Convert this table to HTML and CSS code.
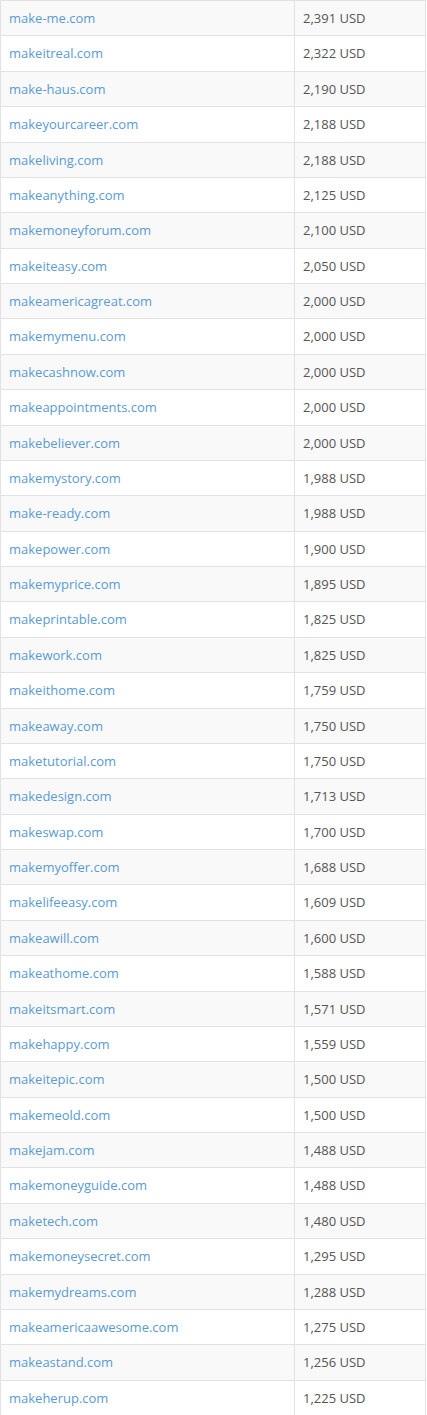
FILE: index.html
```html
<!DOCTYPE html>
<html lang="en">
<head>
    <meta charset="UTF-8">
    <meta name="viewport" content="width=device-width, initial-scale=1.0">
    <title>make domains</title>
    <link rel="stylesheet" href="styles.css">
</head>
<body>
    <table class="domain-table">
        <tbody>
            <tr><td><a href="#">make-me.com</a></td><td>2,391 USD</td></tr>
            <tr><td><a href="#">makeitreal.com</a></td><td>2,322 USD</td></tr>
            <tr><td><a href="#">make-haus.com</a></td><td>2,190 USD</td></tr>
            <tr><td><a href="#">makeyourcareer.com</a></td><td>2,188 USD</td></tr>
            <tr><td><a href="#">makeliving.com</a></td><td>2,188 USD</td></tr>
            <tr><td><a href="#">makeanything.com</a></td><td>2,125 USD</td></tr>
            <tr><td><a href="#">makemoneyforum.com</a></td><td>2,100 USD</td></tr>
            <tr><td><a href="#">makeiteasy.com</a></td><td>2,050 USD</td></tr>
            <tr><td><a href="#">makeamericagreat.com</a></td><td>2,000 USD</td></tr>
            <tr><td><a href="#">makemymenu.com</a></td><td>2,000 USD</td></tr>
            <tr><td><a href="#">makecashnow.com</a></td><td>2,000 USD</td></tr>
            <tr><td><a href="#">makeappointments.com</a></td><td>2,000 USD</td></tr>
            <tr><td><a href="#">makebeliever.com</a></td><td>2,000 USD</td></tr>
            <tr><td><a href="#">makemystory.com</a></td><td>1,988 USD</td></tr>
            <tr><td><a href="#">make-ready.com</a></td><td>1,988 USD</td></tr>
            <tr><td><a href="#">makepower.com</a></td><td>1,900 USD</td></tr>
            <tr><td><a href="#">makemyprice.com</a></td><td>1,895 USD</td></tr>
            <tr><td><a href="#">makeprintable.com</a></td><td>1,825 USD</td></tr>
            <tr><td><a href="#">makework.com</a></td><td>1,825 USD</td></tr>
            <tr><td><a href="#">makeithome.com</a></td><td>1,759 USD</td></tr>
            <tr><td><a href="#">makeaway.com</a></td><td>1,750 USD</td></tr>
            <tr><td><a href="#">maketutorial.com</a></td><td>1,750 USD</td></tr>
            <tr><td><a href="#">makedesign.com</a></td><td>1,713 USD</td></tr>
            <tr><td><a href="#">makeswap.com</a></td><td>1,700 USD</td></tr>
            <tr><td><a href="#">makemyoffer.com</a></td><td>1,688 USD</td></tr>
            <tr><td><a href="#">makelifeeasy.com</a></td><td>1,609 USD</td></tr>
            <tr><td><a href="#">makeawill.com</a></td><td>1,600 USD</td></tr>
            <tr><td><a href="#">makeathome.com</a></td><td>1,588 USD</td></tr>
            <tr><td><a href="#">makeitsmart.com</a></td><td>1,571 USD</td></tr>
            <tr><td><a href="#">makehappy.com</a></td><td>1,559 USD</td></tr>
            <tr><td><a href="#">makeitepic.com</a></td><td>1,500 USD</td></tr>
            <tr><td><a href="#">makemeold.com</a></td><td>1,500 USD</td></tr>
            <tr><td><a href="#">makejam.com</a></td><td>1,488 USD</td></tr>
            <tr><td><a href="#">makemoneyguide.com</a></td><td>1,488 USD</td></tr>
            <tr><td><a href="#">maketech.com</a></td><td>1,480 USD</td></tr>
            <tr><td><a href="#">makemoneysecret.com</a></td><td>1,295 USD</td></tr>
            <tr><td><a href="#">makemydreams.com</a></td><td>1,288 USD</td></tr>
            <tr><td><a href="#">makeamericaawesome.com</a></td><td>1,275 USD</td></tr>
            <tr><td><a href="#">makeastand.com</a></td><td>1,256 USD</td></tr>
            <tr><td><a href="#">makeherup.com</a></td><td>1,225 USD</td></tr>
        </tbody>
    </table>
</body>
</html>
```

FILE: styles.css
```css
body {
    margin: 0;
    font-family: "Open Sans", "Liberation Sans", Arial, sans-serif;
    font-size: 13px;
    color: #555;
    background: #fff;
}

.domain-table {
    width: 426px;
    border-collapse: collapse;
    border: 1px solid #e2e2e2;
}

.domain-table td {
    padding: 8px 8px;
    line-height: 18.375px;
    border: 1px solid #e2e2e2;
    vertical-align: top;
}

.domain-table td:first-child {
    width: 277px;
}

.domain-table tr:nth-child(odd) {
    background: #f9f9f9;
}

.domain-table a {
    color: #5a9bd1;
    text-decoration: none;
}
```
